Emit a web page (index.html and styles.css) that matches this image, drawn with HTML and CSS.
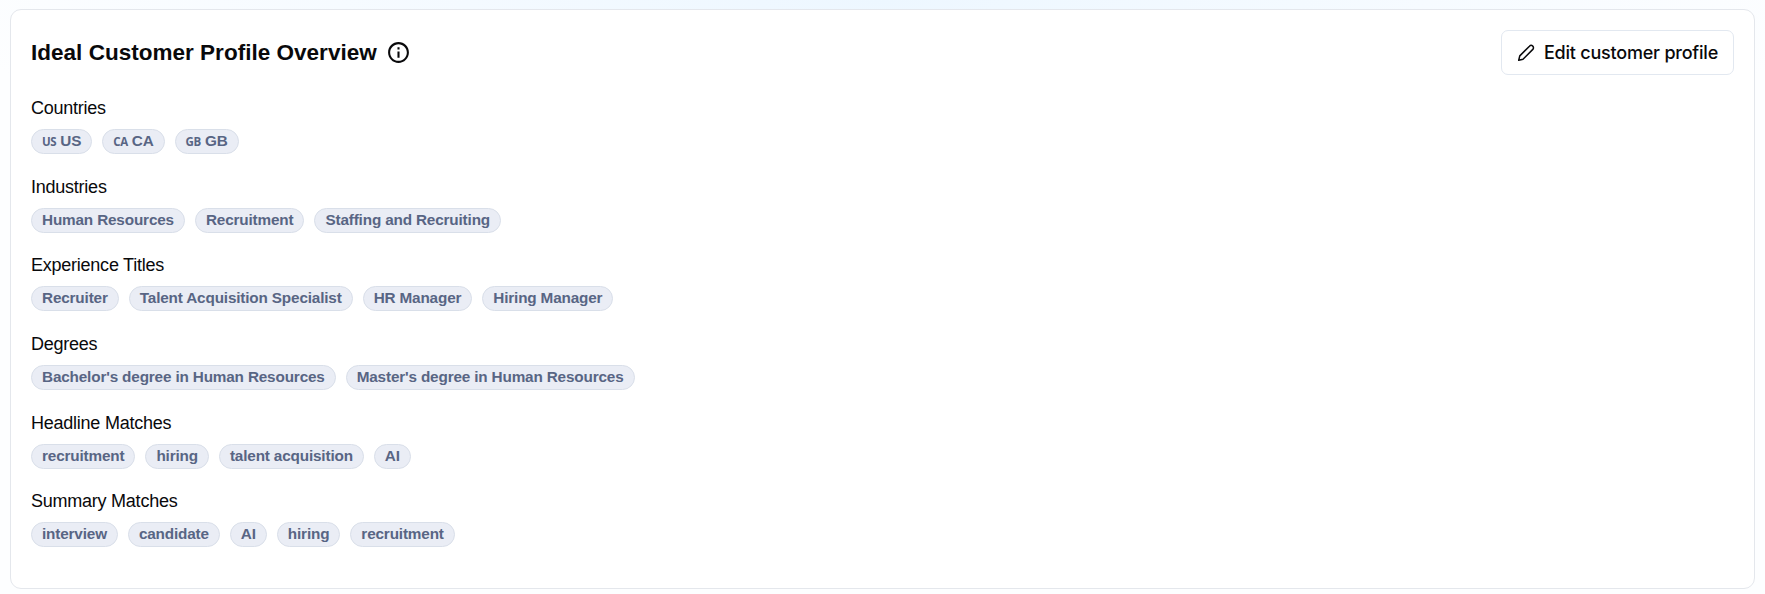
FILE: index.html
```html
<!DOCTYPE html>
<html lang="en">
<head>
    <meta charset="UTF-8">
    <meta name="viewport" content="width=device-width, initial-scale=1.0">
    <title>Ideal Customer Profile</title>
    <link rel="stylesheet" href="styles.css">
</head>
<body>
    <div class="card">
        <div class="card-header">
            <h1>Ideal Customer Profile Overview
                <svg class="info-icon" viewBox="0 0 24 24" fill="currentColor"><path d="M11 7h2v2h-2zm0 4h2v6h-2zm1-9C6.480 2 2 6.480 2 12s4.480 10 10 10 10-4.480 10-10S17.520 2 12 2zm0 18c-4.410 0-8-3.590-8-8s3.590-8 8-8 8 3.590 8 8-3.590 8-8 8z"/></svg>
            </h1>
            <button class="edit-button" type="button">
                <svg class="edit-icon" viewBox="0 0 24 24" fill="none" stroke="currentColor" stroke-width="2" stroke-linecap="round" stroke-linejoin="round"><path d="M16.600 2.900a3 3 0 1 1 4.500 4.300L8 20.300 2.300 21.700l1.400-5.900Z"/></svg>
                Edit customer profile
            </button>
        </div>

        <div class="section">
            <h2>Countries</h2>
            <div class="tags">
                <span class="tag"><span class="flag">US</span> US</span>
                <span class="tag"><span class="flag">CA</span> CA</span>
                <span class="tag"><span class="flag">GB</span> GB</span>
            </div>
        </div>

        <div class="section">
            <h2>Industries</h2>
            <div class="tags">
                <span class="tag">Human Resources</span>
                <span class="tag">Recruitment</span>
                <span class="tag">Staffing and Recruiting</span>
            </div>
        </div>

        <div class="section">
            <h2>Experience Titles</h2>
            <div class="tags">
                <span class="tag">Recruiter</span>
                <span class="tag">Talent Acquisition Specialist</span>
                <span class="tag">HR Manager</span>
                <span class="tag">Hiring Manager</span>
            </div>
        </div>

        <div class="section">
            <h2>Degrees</h2>
            <div class="tags">
                <span class="tag">Bachelor's degree in Human Resources</span>
                <span class="tag">Master's degree in Human Resources</span>
            </div>
        </div>

        <div class="section">
            <h2>Headline Matches</h2>
            <div class="tags">
                <span class="tag">recruitment</span>
                <span class="tag">hiring</span>
                <span class="tag">talent acquisition</span>
                <span class="tag">AI</span>
            </div>
        </div>

        <div class="section">
            <h2>Summary Matches</h2>
            <div class="tags">
                <span class="tag">interview</span>
                <span class="tag">candidate</span>
                <span class="tag">AI</span>
                <span class="tag">hiring</span>
                <span class="tag">recruitment</span>
            </div>
        </div>
    </div>
</body>
</html>
```

FILE: styles.css
```css
* {
    box-sizing: border-box;
}
body {
    margin: 0;
    padding: 9px 10px 5px;
    height: 594px;
    font-family: "Liberation Sans", Arial, sans-serif;
    color: #09090b;
    background: radial-gradient(ellipse 960px 180px at 50% 0, #edf7ff, #fdfeff);
}
.card {
    height: 580px;
    padding: 20px;
    background-color: #fff;
    border: 1px solid #e4e7ec;
    border-radius: 11px;
}
.card-header {
    display: flex;
    justify-content: space-between;
    align-items: center;
    height: 45px;
    margin-bottom: 20px;
}
h1 {
    display: flex;
    align-items: center;
    gap: 9.5px;
    margin: 0;
    font-size: 22.5px;
    font-weight: bold;
    letter-spacing: 0.02px;
}
.info-icon {
    width: 25px;
    height: 25px;
}
.edit-button {
    display: flex;
    align-items: center;
    gap: 9px;
    height: 45px;
    padding: 0 15px;
    font-family: Inter, sans-serif;
    font-size: 18px;
    font-weight: 500;
    letter-spacing: -0.22px;
    color: inherit;
    background-color: #fff;
    border: 1px solid #e2e8f0;
    border-radius: 7px;
}
.edit-icon {
    width: 18px;
    height: 18px;
}
.section {
    margin-bottom: 19.2px;
}
h2 {
    margin: 0 0 7px;
    font-size: 18px;
    font-weight: normal;
    line-height: 27px;
    letter-spacing: -0.24px;
}
.tags {
    display: flex;
    align-items: flex-start;
    gap: 10px;
    height: 25.5px;
}
.tag {
    height: 25px;
    padding: 0 10px;
    font-size: 15.3px;
    font-weight: bold;
    line-height: 22px;
    letter-spacing: -0.16px;
    color: #586584;
    background-color: #eaedf5;
    border: 1px solid #d9dfe9;
    border-radius: 13px;
}
.flag {
    font-family: "Open Sans", sans-serif;
    font-size: 11.5px;
    line-height: 1;
    letter-spacing: -0.4px;
}
```
